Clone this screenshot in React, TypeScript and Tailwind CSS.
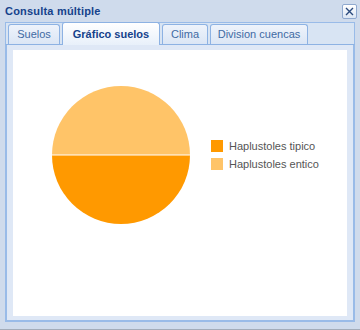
import React from 'react';

const tabs = [
    { label: 'Suelos', w: 'w-[52px]' },
    { label: 'Gráfico suelos', w: 'w-[98px]', active: true },
    { label: 'Clima', w: 'w-[46px]' },
    { label: 'Division cuencas', w: 'w-[98px]' },
];

function PieChart() {
    const cx = 108;
    const cy = 75;
    const r = 69;
    return (
        <svg width="190" height="160" viewBox="0 0 190 160" className="block shrink-0">
            <path d={`M ${cx - r} ${cy} A ${r} ${r} 0 0 1 ${cx + r} ${cy} Z`} fill="#ffc468" />
            <path d={`M ${cx - r} ${cy} A ${r} ${r} 0 0 0 ${cx + r} ${cy} Z`} fill="#ff9900" />
            <line x1={cx - r} y1={cy} x2={cx + r} y2={cy} stroke="#ffffff" strokeWidth="1" />
        </svg>
    );
}

export default function App() {
    return (
        <div className="w-[360px] h-[330px] bg-[#cfdbec] border-b border-[#a2acba] flex flex-col font-['Liberation_Sans',Arial,sans-serif] text-[11px]">
            {/* title bar */}
            <div className="h-[22px] flex items-center justify-between pl-[5px] pr-[3px]">
                <span className="font-bold text-[#15428b] text-[11px] leading-none tracking-[0.2px]">Consulta múltiple</span>
                <div className="w-[15px] h-[15px] rounded-[2px] border border-[#8fa9cf] bg-gradient-to-b from-[#ffffff] to-[#dce6f4] flex items-center justify-center">
                    <svg width="9" height="9" viewBox="0 0 9 9">
                        <path d="M1 1 L8 8 M8 1 L1 8" stroke="#2a4a7d" strokeWidth="1.4" />
                    </svg>
                </div>
            </div>

            <div className="flex-1 mx-[5px] mb-[7px] flex flex-col">
                {/* tab strip */}
                <div className="h-[23px] flex items-end gap-[2px] pl-[2px] bg-[#d8e4f3] border-t border-x border-[#99bbe8] border-b border-b-[#8db2e3]">
                    {tabs.map((t) =>
                        t.active ? (
                            <div
                                key={t.label}
                                className={`${t.w} h-[23px] -mb-[1px] rounded-t-[3px] border border-b-0 border-[#8db2e3] bg-gradient-to-b from-[#ffffff] to-[#e8f0fa] flex items-center justify-center font-bold text-[#15428b] text-[11px]`}
                            >
                                {t.label}
                            </div>
                        ) : (
                            <div
                                key={t.label}
                                className={`${t.w} h-[20px] rounded-t-[3px] border border-b-0 border-[#8db2e3] bg-gradient-to-b from-[#eef3fb] to-[#dbe6f5] flex items-center justify-center text-[#416aa3] text-[11px]`}
                            >
                                {t.label}
                            </div>
                        )
                    )}
                </div>

                {/* body */}
                <div className="flex-1 border-x-2 border-b-2 border-[#99bbe8] bg-[#dfe8f6] px-[6px] pt-[5px] pb-[4px] flex">
                    <div className="flex-1 bg-white flex items-start pt-[30px]">
                        <PieChart />
                        <div className="flex flex-col gap-[6px] pt-[60px] pl-[8px]">
                            <div className="flex items-center gap-[6px] h-[12px]">
                                <div className="w-[12px] h-[12px] bg-[#ff9900]" />
                                <span className="text-[#555555] text-[11px] whitespace-nowrap">Haplustoles tipico</span>
                            </div>
                            <div className="flex items-center gap-[6px] h-[12px]">
                                <div className="w-[12px] h-[12px] bg-[#ffc468]" />
                                <span className="text-[#555555] text-[11px] whitespace-nowrap">Haplustoles entico</span>
                            </div>
                        </div>
                    </div>
                </div>
            </div>
        </div>
    );
}
